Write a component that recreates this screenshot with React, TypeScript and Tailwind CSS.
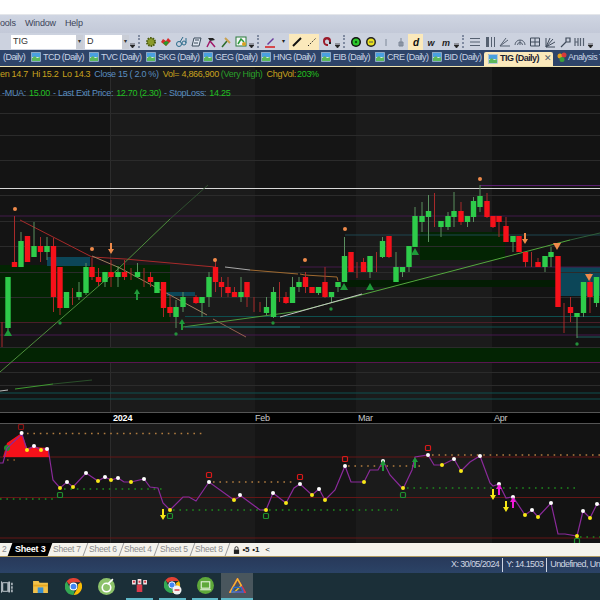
import type { ReactNode } from 'react'

type Candle = [number, number, number, number, number, 'g' | 'r']

const candles: Candle[] = [
  [2, 322, 322, 322, 347, 'r'], [8, 277, 277, 328, 330, 'g'], [14.5, 216, 262, 267, 267, 'r'], [21, 232, 241, 267, 267, 'g'],
  [27.5, 236, 236, 262, 262, 'r'], [34, 222, 246, 257, 257, 'g'], [40.5, 237, 246, 252, 262, 'r'], [47, 237, 246, 252, 260, 'g'],
  [53.5, 238, 246, 297, 312, 'r'], [60, 267, 267, 308, 315, 'r'], [66.5, 292, 292, 308, 308, 'g'], [72.5, 288, 288, 288, 305, 'r'],
  [79, 282, 292, 297, 300, 'g'], [86, 263, 267, 293, 295, 'g'], [92, 258, 267, 277, 280, 'r'], [98.5, 268, 277, 282, 286, 'r'],
  [105, 272, 272, 282, 287, 'g'], [111, 260, 272, 277, 287, 'r'], [118, 266, 272, 277, 287, 'g'], [124.5, 260, 272, 277, 280, 'r'],
  [131, 268, 268, 268, 280, 'r'], [137.5, 263, 272, 277, 278, 'g'], [144, 268, 268, 268, 287, 'r'], [150.5, 272, 277, 282, 287, 'r'],
  [157, 282, 282, 293, 293, 'g'], [163.5, 282, 282, 308, 317, 'r'], [170, 295, 307, 313, 317, 'r'], [176, 300, 307, 317, 328, 'g'],
  [183, 292, 297, 307, 312, 'g'], [196, 295, 297, 303, 304, 'r'], [202, 297, 297, 303, 317, 'g'], [209, 272, 277, 297, 307, 'g'],
  [215.5, 258, 267, 282, 292, 'r'], [221.5, 277, 282, 287, 297, 'r'], [228, 277, 287, 293, 297, 'r'], [234.5, 287, 292, 297, 297, 'r'],
  [241, 277, 292, 297, 302, 'g'], [247, 282, 282, 297, 307, 'r'], [254, 297, 297, 297, 312, 'r'], [260, 302, 302, 302, 312, 'r'],
  [266.5, 297, 307, 313, 315, 'g'], [273.5, 287, 292, 317, 318, 'g'], [279.5, 282, 282, 282, 302, 'r'], [286, 292, 297, 303, 304, 'r'],
  [292.5, 277, 287, 303, 303, 'g'], [299, 277, 282, 287, 292, 'g'], [305.5, 272, 277, 287, 293, 'r'], [312, 287, 287, 293, 293, 'r'],
  [318.5, 287, 287, 293, 295, 'g'], [325, 267, 282, 297, 298, 'r'], [331.5, 292, 292, 297, 302, 'g'], [338, 282, 282, 287, 292, 'g'],
  [344.5, 237, 256, 282, 282, 'g'], [351, 252, 252, 272, 272, 'r'], [357, 262, 262, 262, 278, 'r'], [363.5, 258, 262, 272, 272, 'r'],
  [370, 256, 256, 272, 278, 'g'], [376.5, 252, 252, 252, 272, 'r'], [382.5, 237, 241, 257, 258, 'g'], [389, 236, 236, 257, 258, 'r'],
  [396, 252, 267, 282, 282, 'g'], [402.5, 267, 267, 272, 277, 'g'], [409, 246, 246, 267, 272, 'g'], [415, 207, 216, 247, 247, 'g'],
  [422, 202, 216, 222, 232, 'g'], [428.5, 195, 211, 217, 242, 'g'], [434.5, 193, 193, 193, 227, 'r'], [441, 221, 221, 227, 237, 'g'],
  [448, 212, 216, 227, 230, 'g'], [454, 192, 211, 217, 227, 'g'], [461, 202, 211, 222, 225, 'r'], [467.5, 216, 216, 222, 227, 'g'],
  [473.5, 197, 201, 217, 222, 'g'], [480, 185, 196, 207, 212, 'g'], [487, 193, 201, 217, 218, 'r'], [493, 216, 216, 227, 228, 'r'],
  [499, 216, 216, 222, 237, 'r'], [506, 217, 226, 242, 242, 'r'], [513, 236, 236, 242, 252, 'g'], [519, 236, 236, 252, 252, 'r'],
  [525.5, 252, 252, 262, 267, 'r'], [531.5, 252, 252, 252, 267, 'r'], [538, 258, 262, 267, 267, 'r'], [545, 256, 256, 267, 272, 'g'],
  [551, 247, 252, 257, 267, 'g'], [558, 256, 256, 307, 307, 'r'], [564, 303, 303, 303, 333, 'r'], [570.5, 297, 307, 313, 322, 'r'],
  [577, 313, 313, 317, 338, 'g'], [583.5, 282, 282, 313, 317, 'g'], [590, 273, 282, 297, 313, 'r'], [596.5, 277, 277, 303, 307, 'g'],
]

const purple = [[0, 463], [3, 463], [7, 448], [22, 434], [27, 450], [34, 446], [41, 450], [48, 448], [53, 480], [60, 488], [67, 482], [73, 487], [86, 473], [98, 481], [105, 477], [111, 480], [118, 478], [124, 482], [131, 482], [144, 479], [150, 487], [158, 488], [163, 503], [170, 510], [183, 497], [189, 497], [196, 501], [209, 482], [234, 500], [241, 496], [260, 510], [266, 510], [273, 493], [286, 503], [294, 488], [300, 484], [312, 495], [319, 489], [325, 500], [335, 490], [345, 466], [351, 482], [364, 482], [370, 470], [378, 470], [383, 461], [390, 475], [402, 488], [403, 489], [412, 470], [415, 457], [428, 455], [434, 465], [442, 465], [454, 459], [461, 471], [470, 462], [480, 456], [490, 483], [493, 486], [499, 484], [506, 498], [513, 497], [525, 515], [532, 510], [538, 517], [551, 503], [558, 534], [565, 534], [577, 536], [583, 511], [590, 518], [597, 504], [600, 505]]
const whiteDots = [[21.6, 433], [34, 446], [47, 449], [67, 482], [86, 473], [105, 477], [118, 478], [144, 479], [209, 482], [240, 495], [273, 493], [300, 484], [319, 489], [345, 466], [383, 461], [428, 455], [454, 459], [480, 456], [499, 484], [513, 497], [532, 510], [551, 503], [583, 511], [597, 504]]
const yellowDots = [[27, 450], [41, 450], [60, 488], [73, 487], [98, 481], [111, 480], [131, 482], [170, 510], [234, 500], [266, 510], [286, 503], [312, 495], [325, 500], [364, 482], [403, 488], [442, 465], [461, 471], [525, 515], [538, 517], [577, 536], [590, 518]]
const bands: [number, number, string][] = [[0, 110, '#141414'], [110, 255, '#1b1b1b'], [255, 356, '#151515'], [356, 492, '#1b1b1b'], [492, 600, '#131313']]

const grid = [95, 113, 135, 160, 195, 221, 246, 272, 297, 322, 347, 372, 385]
const hlines: [number, number, number, string][] = [
  [0, 600, 216, '#431a4a'], [0, 600, 335, '#47184f'], [0, 600, 362.5, '#5a1550'], [0, 600, 393, '#0e5050'], [0, 600, 399, '#0e5050'],
  [185, 600, 316.5, '#0e4f4f'], [185, 600, 327, '#0e4f4f'], [0, 600, 322.5, '#4a1e28'], [345, 600, 235, '#1f4650'], [300, 600, 267, '#451a4a'],
  [480, 600, 185.5, '#5a1f70'], [577, 600, 337, '#1f6060'],
]

function Arrow({ x, y, color, up }: { x: number; y: number; color: string; up?: boolean }) {
  const d = up ? 1 : -1
  return (
    <path
      d={`M${x} ${y - 6 * d} L${x + 3} ${y - 1 * d} L${x + 1} ${y - 1 * d} L${x + 1} ${y + 5 * d} L${x - 1} ${y + 5 * d} L${x - 1} ${y - 1 * d} L${x - 3} ${y - 1 * d} Z`}
      fill={color}
    />
  )
}

function Tri({ x, y, color, up = true }: { x: number; y: number; color: string; up?: boolean }) {
  const d = up ? 1 : -1
  return <path d={`M${x} ${y - 4 * d} L${x + 4} ${y + 3 * d} L${x - 4} ${y + 3 * d} Z`} fill={color} />
}

function PriceChart() {
  return (
    <svg viewBox="0 67 600 345" className="block w-full h-[345px]">
      {bands.map(([a, b, c]) => <rect key={a} x={a} y={67} width={b - a} height={345} fill={c} />)}
      <line x1={110.5} x2={110.5} y1={67} y2={412} stroke="#2c2c2c" />
      <rect x={0} y={265} width={170} height={57} fill="#032403" />
      <rect x={420} y={232} width={85} height={28} fill="#032403" />
      <rect x={345} y={280} width={250} height={7} fill="#031c03" />
      <rect x={0} y={347} width={600} height={15} fill="#032403" />
      <rect x={47} y={257} width={43} height={9} fill="#0c4658" />
      <rect x={167} y={292} width={28} height={4} fill="#0c4658" />
      <rect x={560} y={267} width={40} height={29} fill="#0c4658" />
      {grid.map(y => <line key={y} x1={0} x2={600} y1={y + 0.5} y2={y + 0.5} stroke="#2b2b2b" />)}
      {hlines.map(([a, b, y, c]) => <line key={`${a}-${y}`} x1={a} x2={b} y1={y} y2={y} stroke={c} />)}
      <line x1={0} x2={600} y1={188.5} y2={188.5} stroke="#d8d8d8" />

      <polyline points="20,220 92,257 125,259 215,267" fill="none" stroke="#a82a2a" />
      <polyline points="0,372 117,270 170,219" fill="none" stroke="#4e8f3d" />
      <line x1={170} y1={219} x2={208} y2={185} stroke="#2f4f2f" />
      <polyline points="92,256 120,268 207,315" fill="none" stroke="#a08060" />
      <line x1={213} y1={319} x2={246} y2={337} stroke="#96604f" />
      <line x1={183} y1={327} x2={300} y2={311} stroke="#4e9a3d" />
      <line x1={300} y1={311} x2={570} y2={240} stroke="#54a83e" />
      <line x1={570} y1={240} x2={600} y2={233} stroke="#2f5f3a" />
      <line x1={280} y1={317} x2={362} y2={294} stroke="#c4c4c4" />
      <line x1={225} y1={267} x2={250} y2={270} stroke="#a8a8a8" />
      <polyline points="250,270 298,274" fill="none" stroke="#a06a30" />
      <polyline points="300,274 305,275 337,277 338,281" fill="none" stroke="#a06a30" />
      <line x1={185} y1={327} x2={300} y2={327} stroke="#1d6a6a" />
      <line x1={0} y1={391} x2={8} y2={390} stroke="#bbbbbb" />
      <line x1={15} y1={389} x2={53} y2={384} stroke="#3f9a30" />
      <line x1={53} y1={384} x2={92} y2={380} stroke="#2a4f2a" />

      {candles.map(([x, hi, top, bot, lo, c]) => {
        const col = c === 'g' ? '#2ecc4a' : '#f5111a'
        const wick = c === 'g' ? '#5a8f5f' : '#a82a2a'
        return (
          <g key={x}>
            <line x1={x} x2={x} y1={hi} y2={lo} stroke={wick} />
            {bot > top && <rect x={x - 2.7} y={top} width={5.4} height={bot - top} fill={col} />}
          </g>
        )
      })}

      {[[15, 209], [92, 249], [215, 260], [305, 260], [345, 229], [480, 179]].map(([x, y]) => (
        <circle key={x} cx={x} cy={y} r={2} fill="#ef8a4a" />
      ))}
      {[[60, 323], [176, 334], [273, 323], [331, 309], [577, 344]].map(([x, y]) => (
        <circle key={x} cx={x} cy={y} r={1.7} fill="#23913a" />
      ))}
      <Arrow x={111} y={248} color="#ef8a4a" />
      <Arrow x={525} y={238} color="#ef8a4a" />
      <Tri x={557} y={246} color="#ef8a4a" up={false} />
      <Tri x={589} y={277} color="#ef8a4a" up={false} />
      <Tri x={8} y={333} color="#1f9a3a" />
      <Tri x={344} y={287} color="#1f9a3a" />
      <Tri x={370} y={287} color="#1f9a3a" />
      <Tri x={415} y={252} color="#1f9a3a" />
      <Arrow x={137} y={295} color="#1f9a3a" up />
      <Arrow x={182} y={325} color="#1f9a3a" up />
    </svg>
  )
}

function dots(x1: number, x2: number, y: number, c: string) {
  return <line x1={x1} x2={x2} y1={y} y2={y} stroke={c} strokeWidth={1.6} strokeDasharray="1.6 4.8" key={`${x1}-${y}`} />
}

function Square({ x, y, c }: { x: number; y: number; c: string }) {
  return <rect x={x - 2.5} y={y - 2.5} width={5} height={5} rx={1} fill="none" stroke={c} strokeWidth={1.2} />
}

function Indicator() {
  return (
    <svg viewBox="0 424 600 119" className="block w-full h-[119px]">
      {bands.map(([a, b, c]) => <rect key={a} x={a} y={424} width={b - a} height={119} fill={c} />)}
      <line x1={110.5} x2={110.5} y1={424} y2={543} stroke="#2c2c2c" />
      {[457, 497.5, 538].map(y => <line key={y} x1={0} x2={600} y1={y} y2={y} stroke="#651616" />)}
      {dots(27, 205, 433.5, '#b07c40')}
      {dots(7, 16, 460, '#8a5a2a')}
      {dots(213, 296, 482, '#b07c40')}
      {dots(348, 424, 466, '#b07c40')}
      {dots(432, 600, 455, '#b07c40')}
      {dots(0, 55, 499, '#1f8a1f')}
      {dots(64, 165, 489, '#1f8a1f')}
      {dots(173, 398, 510, '#1f8a1f')}
      {dots(407, 575, 488, '#1f8a1f')}
      {dots(580, 600, 537, '#1f8a1f')}
      <path d="M3 457 L7 443 L21.6 433 L27 448 L33 447 L48 448 L49 457 Z" fill="#f5111a" />
      <circle cx={7} cy={448} r={3} fill="#1f8f2f" />
      <polyline points={purple.map(p => p.join(',')).join(' ')} fill="none" stroke="#8a2a9a" strokeWidth={1.2} />
      {whiteDots.map(([x, y]) => <circle key={x} cx={x} cy={y} r={2} fill="#ffffff" />)}
      {yellowDots.map(([x, y]) => <circle key={x} cx={x} cy={y} r={2} fill="#f7e816" />)}
      <Square x={21} y={427} c="#8a1414" />
      <Square x={209} y={475} c="#d81a1a" />
      <Square x={300} y={477} c="#d81a1a" />
      <Square x={345} y={459} c="#d81a1a" />
      <Square x={428} y={448} c="#d81a1a" />
      <Square x={60} y={495} c="#1f8f2f" />
      <Square x={170} y={516} c="#1f8f2f" />
      <Square x={266} y={516} c="#1f8f2f" />
      <Square x={403} y={495} c="#1f8f2f" />
      <Square x={577} y={541} c="#1f8f2f" />
      <Arrow x={163} y={514} color="#f7e816" />
      <Arrow x={493} y={494} color="#f7e816" />
      <Arrow x={506} y={506} color="#f7e816" />
      <Arrow x={499} y={490} color="#f01ad8" up />
      <Arrow x={513} y={503} color="#f01ad8" up />
      <Arrow x={383} y={466} color="#1f9a3a" up />
      <Arrow x={415} y={463} color="#1f9a3a" up />
    </svg>
  )
}

function Grip() {
  return <span className="w-[3px] h-[13px] mx-[2px] shrink-0 border-l-2 border-dotted border-[#7f8aa0]" />
}

function Chevron() {
  return (
    <span className="w-[7px] h-[16px] shrink-0 flex flex-col justify-end items-center pb-[2px]">
      <svg viewBox="0 0 5 5" className="w-[5px] h-[5px]"><path d="M0 0h5M0 2h5L2.500 5z" stroke="#222" strokeWidth={0.7} fill="#222" /></svg>
    </span>
  )
}

function Tool({ children, active }: { children: ReactNode; active?: boolean }) {
  return (
    <span className={`w-[15px] h-[16px] shrink-0 flex items-center justify-center ${active ? 'bg-[#fbe9bb]' : ''}`}>
      <svg viewBox="0 0 12 12" className="w-[12px] h-[12px]">{children}</svg>
    </span>
  )
}

function DocIcon() {
  return (
    <svg viewBox="0 0 10 10" className="w-[10px] h-[10px] shrink-0">
      <rect x={0.5} y={0.5} width={9} height={9} fill="#e8f4fb" stroke="#8cb0d0" strokeWidth={0.6} />
      <path d="M1 1h8v4H1z" fill="#4aa0e0" />
      <path d="M1 9V6l3-2 2 2 3-1v4z" fill="#5cb85c" />
    </svg>
  )
}

const tabs = [
  { name: 'TCD (Daily)', w: 'w-[58px]' },
  { name: 'TVC (Daily)', w: 'w-[57px]' },
  { name: 'SKG (Daily)', w: 'w-[57px]' },
  { name: 'GEG (Daily)', w: 'w-[58px]' },
  { name: 'HNG (Daily)', w: 'w-[60px]' },
  { name: 'EIB (Daily)', w: 'w-[54px]' },
  { name: 'CRE (Daily)', w: 'w-[57px]' },
  { name: 'BID (Daily)', w: 'w-[52px]' },
]

const sheets = ['Sheet 7', 'Sheet 6', 'Sheet 4', 'Sheet 5', 'Sheet 8']

export default function App() {
  return (
    <div className="w-[600px] h-[600px] overflow-hidden flex flex-col bg-white font-['Liberation_Sans',sans-serif]">
      <div className="h-[15px] shrink-0 bg-white border-b border-[#e4e6ea]" />

      {/* menu */}
      <div className="h-[18px] shrink-0 bg-gradient-to-b from-[#cfd5e2] to-[#c3c9d8] flex items-center text-[9px] tracking-[-0.2px] text-[#3c4458]">
        <span className="w-[25px] shrink-0">ools</span>
        <span className="w-[40px] shrink-0">Window</span>
        <span>Help</span>
      </div>

      {/* toolbar */}
      <div className="h-[17px] shrink-0 bg-[#ccd2df] flex items-center overflow-hidden">
        <span className="w-[11px] shrink-0" />
        <div className="w-[72px] h-[14px] shrink-0 bg-white flex items-center justify-between text-[9px] text-[#333] pl-[2px]">
          TIG
          <span className="w-[7px] h-full bg-[#c9cdd6] flex items-center justify-center text-[6px]">▾</span>
        </div>
        <div className="w-[44px] h-[14px] ml-[2px] shrink-0 bg-white flex items-center justify-between text-[9px] text-[#333] pl-[2px]">
          D
          <span className="w-[7px] h-full bg-[#c9cdd6] flex items-center justify-center text-[6px]">▾</span>
        </div>
        <Chevron />
        <Grip />
        <Tool><circle cx={6} cy={6} r={4} fill="#8a9a2a" stroke="#4a5a10" strokeWidth={2} strokeDasharray="1.500 1" /></Tool>
        <Tool><path d="M6 10 1 6l2-3 3 2 2-3 3 3z" fill="#d82a2a" /><path d="M6 10 3 7l3-2 3 1z" fill="#2a9a2a" /></Tool>
        <Tool><circle cx={4} cy={8} r={2.500} fill="none" stroke="#2a6a8a" /><circle cx={9} cy={7} r={2} fill="none" stroke="#2a6a8a" /><path d="M5 6 8 1m3 6V2" stroke="#2a6a8a" fill="none" /></Tool>
        <Tool><path d="M2 10 4 2h7L9 10z" fill="#dfe6f0" stroke="#3a4a5a" /><path d="M5 4h4M4 7h4" stroke="#3a4a5a" /></Tool>
        <Tool><path d="M3 2h5l2 2-5 1z" fill="#222" /><path d="m5 5-3 6m3-6 5 6" stroke="#a01a6a" strokeWidth={1.500} /></Tool>
        <Tool><path d="M2 11 7 5" stroke="#2a6a2a" strokeWidth={1.500} /><path d="m5 2 5 5" stroke="#c8a050" strokeWidth={2} /></Tool>
        <Tool><rect x={1} y={1} width={10} height={9} fill="#f4f6f8" stroke="#2a7a3a" /><path d="M3 8 6 3l3 3" stroke="#2a9a3a" fill="none" strokeWidth={1.500} /><circle cx={9} cy={8} r={2} fill="#d8a020" /></Tool>
        <Chevron />
        <Grip />
        <Tool><path d="m3 8 6-6 1 1-6 6z" fill="#6a3a9a" /><path d="M1 11h10" stroke="#d81a1a" strokeWidth={1.500} /></Tool>
        <span className="w-[12px] shrink-0 flex justify-center text-[6px] text-[#222]">▾</span>
        <Tool active><path d="m2 10 8-8" stroke="#111" strokeWidth={2} /></Tool>
        <Tool active><path d="M2 10 10 2" stroke="#222" strokeDasharray="1.500 1.500" /></Tool>
        <Tool><path d="M2 5a4 4 0 0 1 8 0v1H8V5a2 2 0 0 0-4 1c0 2 2 2 3 2v2c-3 0-5-2-5-5z" fill="#9a1a2a" /><path d="M8 6h2v2H8z" fill="#222" /></Tool>
        <Chevron />
        <Grip />
        <Tool><circle cx={6} cy={6} r={5} fill="#111" /><circle cx={6} cy={6} r={3.500} fill="#2ec82e" /><circle cx={6} cy={6} r={1.200} fill="#0a5a0a" /></Tool>
        <Tool><circle cx={6} cy={6} r={5} fill="#222" /><circle cx={6} cy={6} r={3.500} fill="#e8e020" /><path d="M4 6h4" stroke="#555" /></Tool>
        <Tool><path d="M6 3v7" stroke="#8a94a4" strokeWidth={1.200} /></Tool>
        <Tool><path d="M6 2v8M4 6h4v4H4z" stroke="#7a8494" fill="#9aa4b4" /></Tool>
        <Tool active><text x={6} y={10} textAnchor="middle" fontSize={10} fontWeight={700} fontStyle="italic" fill="#111">d</text></Tool>
        <Tool><text x={6} y={10} textAnchor="middle" fontSize={9} fontWeight={700} fontStyle="italic" fill="#222">w</text></Tool>
        <Tool><text x={6} y={10} textAnchor="middle" fontSize={9} fontWeight={700} fontStyle="italic" fill="#222">m</text></Tool>
        <Chevron />
        <Grip />
        <Tool><path d="M1 2.500h10M1 6h10M1 9.500h10" stroke="#556070" /></Tool>
        <Tool><path d="M2 1h3v10H2zM7 1h1v10H7zM10 1h1v10h-1z" fill="#556070" /></Tool>
        <Tool><path d="M1 10h10M1 10l8-6M1 10l6-8" stroke="#556070" fill="none" /></Tool>
        <Tool><path d="M1 9a5 5 0 0 1 10 0M3.500 9a2.500 2.500 0 0 1 5 0M6 4v5" stroke="#556070" fill="none" /></Tool>
        <Tool><path d="M1.500 2h9v8h-9zM1.500 6h9M6 2v8" stroke="#3f4a5a" fill="none" /></Tool>
        <Tool><path d="M2 11V2M2 11h9M2 11l7-8M2 11l9-5M2 11l4-9" stroke="#3f4a5a" fill="none" /></Tool>
        <Tool><path d="M7 2h4v4H7zM7 6l-5 5" stroke="#3f4a5a" fill="none" strokeWidth={1.200} /></Tool>
        <Tool><path d="M1 2v8M4 2v8M1 6h3M6.500 2v8M9.500 2v8" stroke="#556070" strokeWidth={1.200} /></Tool>
        <Chevron />
      </div>

      {/* document tabs */}
      <div className="h-[17px] shrink-0 bg-[#2e4469] flex items-end text-[9px] tracking-[-0.55px] text-[#c9d4e6] border-b border-[#efe3b0] overflow-hidden">
        <span className="w-[31px] shrink-0 pl-[3px] mb-[2px]">(Daily)</span>
        {tabs.map(t => (
          <span key={t.name} className={`${t.w} shrink-0 flex items-center gap-[2px] mb-[2px]`}>
            <DocIcon />
            <span className="whitespace-nowrap">{t.name}</span>
          </span>
        ))}
        <span className="w-[69px] h-[14px] shrink-0 bg-[#fbe9bb] rounded-t-[2px] flex items-center pl-[4px] gap-[2px] text-[#1a2233] font-bold">
          <DocIcon />
          <span className="whitespace-nowrap">TIG (Daily)</span>
          <span className="font-normal text-[#55606f] ml-[3px]">✕</span>
        </span>
        <span className="ml-[4px] flex items-center gap-[1px] mb-[2px] whitespace-nowrap">
          <svg viewBox="0 0 10 10" className="w-[10px] h-[10px] shrink-0">
            <circle cx={3} cy={4} r={2.500} fill="#e0a020" /><circle cx={7} cy={3} r={2.500} fill="#d83a3a" /><circle cx={5} cy={7.500} r={2.500} fill="#3aa03a" />
          </svg>
          Analysis T
        </span>
      </div>

      {/* price chart */}
      <div className="relative shrink-0 h-[345px] overflow-hidden">
        <PriceChart />
        <div className="absolute left-0 top-0 whitespace-nowrap text-[9px] tracking-[-0.3px] leading-[13px] pt-[1px]">
          <div className="flex gap-[4px]">
            <span className="text-[#c8a21e]">en 14.7</span>
            <span className="text-[#c8a21e]">Hi 15.2</span>
            <span className="text-[#c8a21e]">Lo 14.3</span>
            <span className="text-[#5a8ec0]">Close 15 ( 2.0 %)</span>
            <span className="text-[#c8a21e]">Vol= 4,866,900</span>
            <span className="text-[#2aa02a] -ml-[2px]">(Very High)</span>
            <span className="text-[#c8a21e]">ChgVol:</span>
            <span className="text-[#22c022] -ml-[3px]">203%</span>
          </div>
          <div className="mt-[6px] pl-[2px] flex gap-[3px]">
            <span className="text-[#5a8ec0]">-MUA:</span>
            <span className="text-[#22c022]">15.00</span>
            <span className="text-[#5a8ec0]">- Last Exit Price:</span>
            <span className="text-[#22c022]">12.70 (2.30)</span>
            <span className="text-[#5a8ec0]">- StopLoss:</span>
            <span className="text-[#22c022]">14.25</span>
          </div>
        </div>
      </div>

      {/* time axis */}
      <div className="relative h-[12px] shrink-0 bg-black border-y border-[#555] text-[9px] tracking-[-0.2px] leading-[10px] text-[#c8c8c8]">
        <span className="absolute left-[113px] top-0 font-bold text-white">2024</span>
        <span className="absolute left-[255px] top-0">Feb</span>
        <span className="absolute left-[358px] top-0">Mar</span>
        <span className="absolute left-[494px] top-0">Apr</span>
      </div>

      <Indicator />

      {/* sheet tabs */}
      <div className="h-[13px] shrink-0 bg-[#f5f3ec] flex items-center text-[8.500px] tracking-[-0.2px] text-[#8a8a8a] overflow-hidden">
        <span className="w-[10px] shrink-0 pl-[2px]">2</span>
        <span className="w-[40px] h-full shrink-0 bg-black text-white font-bold text-[9px] flex items-center justify-center -skew-x-[20deg]">
          <span className="skew-x-[20deg] whitespace-nowrap">Sheet 3</span>
        </span>
        {sheets.map(s => (
          <span key={s} className="w-[35.5px] shrink-0 whitespace-nowrap text-center border-r border-[#9a9a9a] -skew-x-[20deg]">
            <span className="inline-block skew-x-[20deg]">{s}</span>
          </span>
        ))}
        <span className="w-[5px] shrink-0" />
        <span className="flex items-center gap-[3px] text-[8px] text-[#222] font-bold">
          <svg viewBox="0 0 8 9" className="w-[7px] h-[8px]"><path d="M1 4h6v5H1z" fill="#222" /><path d="M2.200 4V2.500a1.800 1.800 0 0 1 3.600 0V4" fill="none" stroke="#222" /></svg>
          <span>•5</span>
          <span>•1</span>
          <span className="font-normal ml-[3px]">&lt;</span>
        </span>
      </div>

      {/* status bar */}
      <div className="h-[17px] shrink-0 bg-gradient-to-b from-[#28395a] to-[#2b4366] flex items-center text-[9px] tracking-[-0.6px] text-[#cfd6e2] border-t border-[#b09a60] whitespace-nowrap overflow-hidden pl-[451px]">
        <span className="shrink-0 pr-[3px] border-r border-[#cfd6e2]">X: 30/05/2024</span>
        <span className="shrink-0 px-[3px] border-r border-[#cfd6e2]">Y: 14.1503</span>
        <span className="shrink-0 pl-[3px]">Undefined, Und</span>
      </div>

      {/* taskbar */}
      <div className="flex-1 bg-[#1b2f38] flex items-center">
        <span className="w-[24px] shrink-0 flex pl-[1px]">
          <svg viewBox="0 0 14 14" className="w-[12px] h-[12px]">
            <path d="M2 2h6v10H2zM0 1h1v12H0zM9 1h1v12H9z" fill="none" stroke="#d8dee4" />
            <path d="M12 2h1.500v3H12zM12 6h1.500v3H12zM12 10h1.500v3H12z" fill="#d8dee4" />
          </svg>
        </span>
        <span className="w-[33px] shrink-0 flex justify-center">
          <svg viewBox="0 0 16 14" className="w-[15px] h-[13px]">
            <path d="M0 1h6l1 2h9v11H0z" fill="#f2c14a" />
            <path d="M0 5h16v2H0z" fill="#e8a820" />
            <rect x={5} y={8} width={6} height={6} fill="#3a8fd0" />
          </svg>
        </span>
        <span className="w-[33px] shrink-0 flex justify-center">
          <svg viewBox="0 0 16 16" className="w-[17px] h-[17px]">
            <path d="M8 0a8 8 0 0 1 7 4H8a4 4 0 0 0-4 2L1.500 3A8 8 0 0 1 8 0z" fill="#e34133" />
            <path d="M15 4a8 8 0 0 1-7 12l3.500-6A4 4 0 0 0 12 6z" fill="#fbbc05" />
            <path d="M1.500 3 5 10a4 4 0 0 0 4 2l-1 4A8 8 0 0 1 1.500 3z" fill="#34a853" />
            <circle cx={8} cy={8} r={3.200} fill="#4285f4" stroke="#fff" />
          </svg>
        </span>
        <span className="w-[33px] shrink-0 flex justify-center">
          <svg viewBox="0 0 16 16" className="w-[17px] h-[17px]">
            <circle cx={8} cy={8} r={8} fill="#8cc26a" />
            <circle cx={8} cy={9} r={4} fill="none" stroke="#fff" strokeWidth={1.500} />
            <path d="m9 6 5-5" stroke="#fff" strokeWidth={1.500} />
          </svg>
        </span>
        <span className="w-[27px] mx-[3px] h-full shrink-0 flex justify-center items-center border-b-2 border-[#5fb8c8]">
          <svg viewBox="0 0 16 14" className="w-[15px] h-[13px]">
            <path d="M0 1h4v5H0zM6 0h4v6H6zM12 1h4v5h-4z" fill="#f4e4e4" />
            <path d="M5 6h6v8H5z" fill="#d83a4a" />
            <path d="M1 2h2v2H1zM7 2h2v2H7zM13 2h2v2h-2z" fill="#d83a4a" />
          </svg>
        </span>
        <span className="w-[27px] mx-[3px] h-full shrink-0 flex justify-center items-center border-b-2 border-[#5fb8c8]">
          <svg viewBox="0 0 18 18" className="w-[18px] h-[18px]">
            <path d="M8 0a8 8 0 0 1 7 4H8a4 4 0 0 0-4 2L1.500 3A8 8 0 0 1 8 0z" fill="#e34133" />
            <path d="M15 4a8 8 0 0 1-7 12l3.500-6A4 4 0 0 0 12 6z" fill="#fbbc05" />
            <path d="M1.500 3 5 10a4 4 0 0 0 4 2l-1 4A8 8 0 0 1 1.500 3z" fill="#34a853" />
            <circle cx={8} cy={8} r={3.200} fill="#4285f4" stroke="#fff" />
            <circle cx={13} cy={13} r={4.500} fill="#f2f2f2" />
            <path d="M10.500 13h5" stroke="#d83a4a" strokeWidth={1.500} />
          </svg>
        </span>
        <span className="w-[26px] mx-[3px] h-full shrink-0 flex justify-center items-center border-b-2 border-[#5fb8c8]">
          <svg viewBox="0 0 16 16" className="w-[17px] h-[17px]">
            <circle cx={8} cy={8} r={8} fill="#5ea83a" />
            <rect x={4} y={4.500} width={8} height={6} fill="none" stroke="#e8f4e0" />
            <path d="M3 12h10" stroke="#e8f4e0" />
          </svg>
        </span>
        <span className="w-[32px] h-full shrink-0 bg-[#49565d] flex justify-center items-center border-b-2 border-[#5fb8c8]">
          <svg viewBox="0 0 18 16" className="w-[17px] h-[15px]">
            <path d="M9 1 17 15H1z" fill="none" stroke="#d8374a" strokeWidth={2} />
            <path d="M9 1 13 8 6 15H1z" fill="none" stroke="#f0c030" strokeWidth={1.500} />
            <path d="M5 10h8l2 5H3z" fill="none" stroke="#2a6ad0" strokeWidth={1.500} />
          </svg>
        </span>
      </div>
    </div>
  )
}
